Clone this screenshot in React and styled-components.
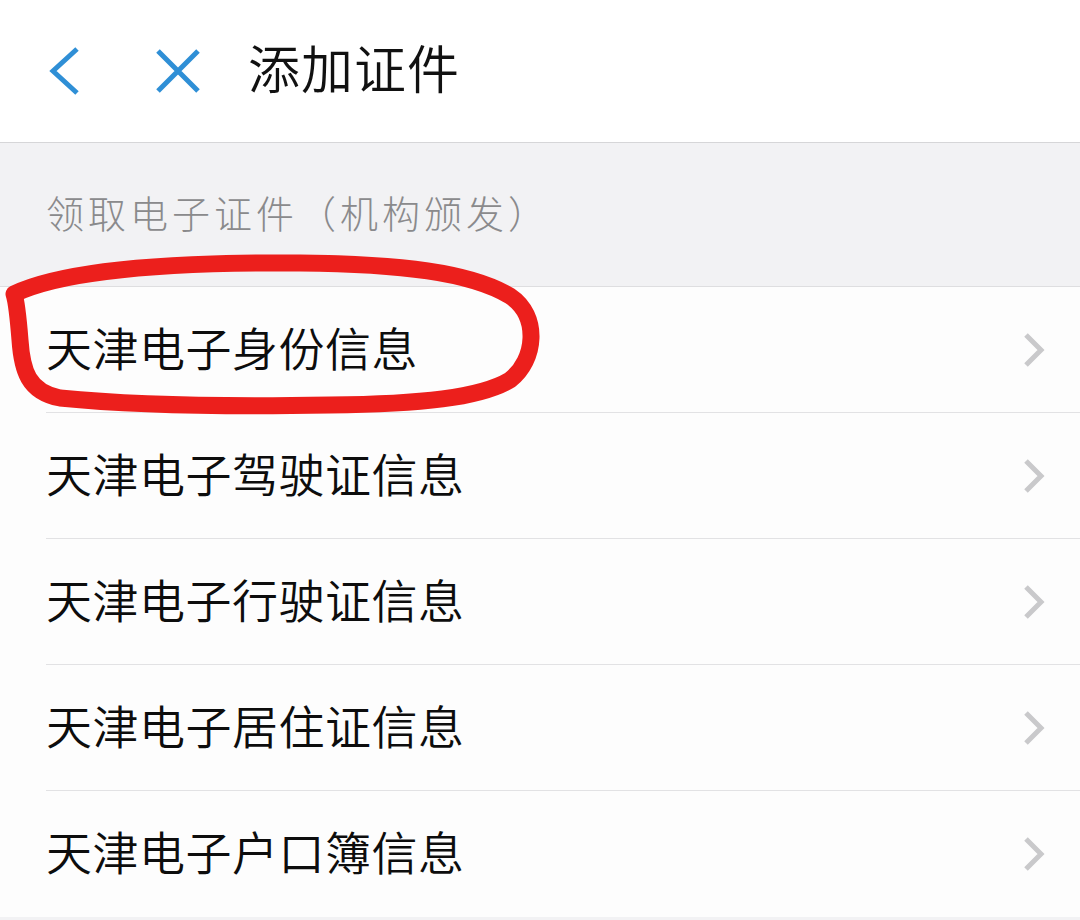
import React from "react";
import styled, { createGlobalStyle } from "styled-components";

const GlobalStyle = createGlobalStyle`
  html, body {
    margin: 0;
    padding: 0;
    background: #f2f2f4;
    font-family: "Noto Sans CJK SC", "Noto Sans", sans-serif;
  }
`;

const Page = styled.div`
  position: relative;
  width: 1080px;
  height: 920px;
  overflow: hidden;
  background: #f2f2f4;
`;

const NavBar = styled.div`
  display: flex;
  align-items: center;
  height: 143px;
  background: #ffffff;
  border-bottom: 1px solid #d6d6d8;
  padding-left: 46px;
  box-sizing: border-box;
`;

const NavButton = styled.button`
  display: flex;
  align-items: center;
  justify-content: center;
  width: ${p => p.w}px;
  height: 50px;
  padding: 0;
  margin-right: ${p => p.gap}px;
  border: none;
  background: none;
`;

const Title = styled.h1`
  margin: 0;
  font-size: 52px;
  font-weight: 350;
  color: #111;
  letter-spacing: 1px;
  line-height: 1;
  padding-bottom: 8px;
`;

const SectionHeader = styled.div`
  height: 144px;
  display: flex;
  align-items: center;
  padding-left: 46px;
  font-size: 38px;
  font-weight: 300;
  color: #8a8a8c;
  letter-spacing: 4px;
  border-bottom: 1px solid #dedee0;
  box-sizing: border-box;
  padding-bottom: 6px;
`;

const List = styled.div`
  background: #fdfdfd;
`;

const Row = styled.div`
  height: 126px;
  margin-left: 46px;
  display: flex;
  align-items: center;
  justify-content: space-between;
  padding-right: 34px;
  box-sizing: border-box;
  border-bottom: ${p => (p.last ? "none" : "1px solid #e2e2e4")};
`;

const RowLabel = styled.span`
  font-size: 46px;
  font-weight: 350;
  color: #0d0d0d;
  letter-spacing: 0.5px;
  padding-bottom: 8px;
`;

const Annotation = styled.svg`
  position: absolute;
  left: 0;
  top: 0;
  pointer-events: none;
`;

const items = [
  "天津电子身份信息",
  "天津电子驾驶证信息",
  "天津电子行驶证信息",
  "天津电子居住证信息",
  "天津电子户口簿信息",
];

function Chevron() {
  return (
    <svg width="24" height="36" viewBox="0 0 24 36">
      <path d="M4 3 L19 18 L4 33" fill="none" stroke="#c9c9cb" strokeWidth="5" />
    </svg>
  );
}

export default function App() {
  return (
    <Page>
      <GlobalStyle />
      <NavBar>
        <NavButton w={36} gap={72}>
          <svg width="34" height="50" viewBox="0 0 34 50">
            <path d="M30 3 L6 25 L30 47" fill="none" stroke="#2f8fd6" strokeWidth="5" />
          </svg>
        </NavButton>
        <NavButton w={48} gap={46}>
          <svg width="46" height="46" viewBox="0 0 46 46">
            <path d="M3 3 L43 43 M43 3 L3 43" fill="none" stroke="#2f8fd6" strokeWidth="5" />
          </svg>
        </NavButton>
        <Title>添加证件</Title>
      </NavBar>
      <SectionHeader>领取电子证件（机构颁发）</SectionHeader>
      <List>
        {items.map((t, i) => (
          <Row key={t} last={i === items.length - 1}>
            <RowLabel>{t}</RowLabel>
            <Chevron />
          </Row>
        ))}
      </List>
      <Annotation width="1080" height="920" viewBox="0 0 1080 920">
        <path
          d="M14 294 C 60 272, 160 262, 300 263 C 400 264, 470 272, 510 296 C 540 316, 536 360, 510 380 C 480 398, 420 404, 330 405 C 220 407, 120 404, 60 398 C 28 392, 22 370, 20 340 C 18 315, 16 300, 14 294 Z"
          fill="none"
          stroke="#ec1f1c"
          strokeWidth="17"
          strokeLinejoin="round"
        />
      </Annotation>
    </Page>
  );
}
